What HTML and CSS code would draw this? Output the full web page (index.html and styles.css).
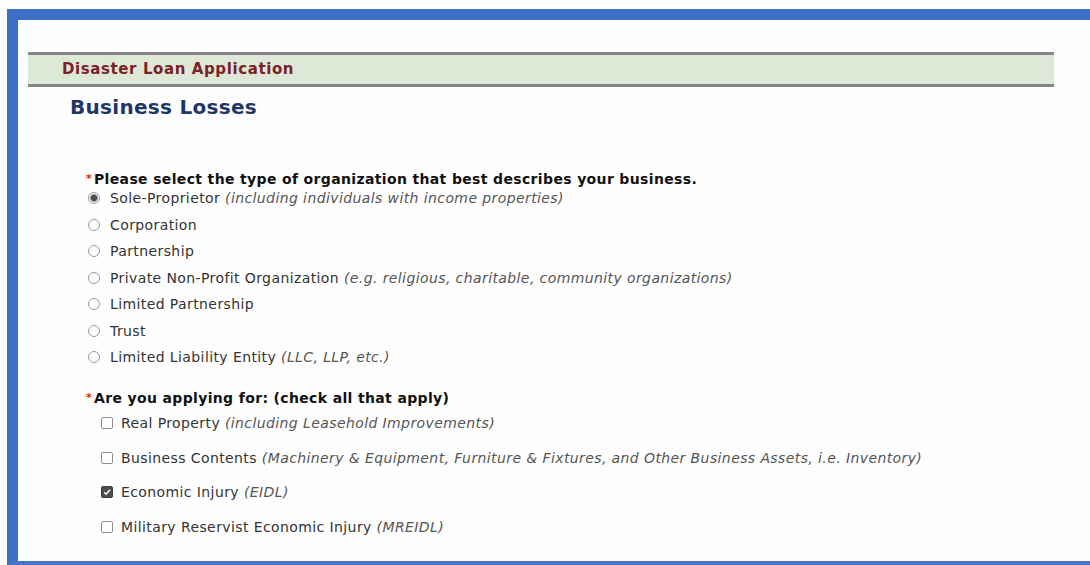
FILE: index.html
```html
<!DOCTYPE html>
<html lang="en">
<head>
<meta charset="utf-8">
<title>Disaster Loan Application</title>
<link rel="stylesheet" href="styles.css">
</head>
<body>
<div class="frame">
  <div class="app-bar"><span class="app-title">Disaster Loan Application</span></div>
  <h1 class="page-title">Business Losses</h1>

  <form class="loan-form">
    <fieldset class="question">
      <legend class="q-label"><span class="req">*</span>Please select the type of organization that best describes your business.</legend>
      <ul class="radio-list">
        <li class="opt"><span class="radio checked"></span>Sole-Proprietor <em>(including individuals with income properties)</em></li>
        <li class="opt"><span class="radio"></span>Corporation</li>
        <li class="opt"><span class="radio"></span>Partnership</li>
        <li class="opt"><span class="radio"></span>Private Non-Profit Organization <em>(e.g. religious, charitable, community organizations)</em></li>
        <li class="opt"><span class="radio"></span>Limited Partnership</li>
        <li class="opt"><span class="radio"></span>Trust</li>
        <li class="opt"><span class="radio"></span>Limited Liability Entity <em>(LLC, LLP, etc.)</em></li>
      </ul>
    </fieldset>

    <fieldset class="question">
      <legend class="q-label"><span class="req">*</span>Are you applying for: (check all that apply)</legend>
      <ul class="check-list">
        <li class="opt"><span class="check"></span>Real Property <em>(including Leasehold Improvements)</em></li>
        <li class="opt"><span class="check"></span>Business Contents <em>(Machinery &amp; Equipment, Furniture &amp; Fixtures, and Other Business Assets, i.e. Inventory)</em></li>
        <li class="opt"><span class="check checked"><svg viewBox="0 0 12 12" width="12" height="12"><path d="M2.5 6.2 L5 8.6 L9.6 3.2" fill="none" stroke="#fff" stroke-width="1.8"/></svg></span>Economic Injury <em>(EIDL)</em></li>
        <li class="opt"><span class="check"></span>Military Reservist Economic Injury <em>(MREIDL)</em></li>
      </ul>
    </fieldset>
  </form>
</div>
</body>
</html>
```

FILE: styles.css
```css
html, body {
  margin: 0;
  padding: 0;
  background: #ffffff;
  overflow: hidden;
}

body {
  font-family: "DejaVu Sans", Verdana, sans-serif;
}

.frame {
  box-sizing: border-box;
  width: 1083px;
  height: 556px;
  margin: 9px 0 0 7px;
  padding: 32px 0 0 10px;
  border-top: 11px solid #3d6fc9;
  border-left: 11px solid #3d6fc9;
  border-bottom: 4px solid #4a74c4;
  background: #fefefe;
}

.app-bar {
  box-sizing: border-box;
  width: 1026px;
  height: 35px;
  border-top: 3px solid #858585;
  border-bottom: 3px solid #858585;
  background: #dde9d6;
  padding: 0 0 1px 34px;
  display: flex;
  align-items: center;
}

.app-title {
  font-size: 15px;
  letter-spacing: 0.6px;
  font-weight: bold;
  color: #7a2226;
}

.page-title {
  margin: 8px 0 0 42px;
  font-size: 20px;
  letter-spacing: 0.3px;
  line-height: 24px;
  font-weight: bold;
  color: #1e3766;
}

.loan-form {
  margin: 52px 0 0 58px;
}

.question {
  border: 0;
  margin: 0;
  padding: 0;
}

.q-label {
  padding: 0;
  font-size: 14px;
  letter-spacing: 0.35px;
  line-height: 16px;
  font-weight: bold;
  color: #111;
  display: flex;
  align-items: center;
}

.req {
  color: #d22;
  font-size: 11px;
  width: 8px;
}

.radio-list,
.check-list {
  list-style: none;
  margin: 0;
  padding: 0;
}

.opt {
  display: flex;
  align-items: center;
  font-size: 14px;
  letter-spacing: 0.4px;
  color: #333;
  white-space: pre;
}

.opt em {
  color: #555;
}

.radio-list {
  margin-top: -2px;
}

.radio-list .opt {
  height: 26.5px;
}

.radio {
  box-sizing: border-box;
  width: 12px;
  height: 12px;
  margin: 0 10px 0 2px;
  border: 1px solid #9a9a9a;
  border-radius: 50%;
  background: #fff;
  display: flex;
  align-items: center;
  justify-content: center;
}

.radio.checked {
  background: radial-gradient(circle, #4e4e4e 0 2.6px, #9c9c9c 3.6px, #fff 4.4px);
}

.question + .question {
  margin-top: 19px;
}

.check-list {
  margin-top: 0;
}

.check-list .opt {
  height: 34.7px;
}

.check {
  box-sizing: border-box;
  width: 12px;
  height: 12px;
  margin: 0 8px 0 15px;
  border: 1px solid #8d8d8d;
  border-radius: 2px;
  background: #fff;
  display: flex;
  align-items: center;
  justify-content: center;
}

.check.checked {
  background: #4d4d4d;
  border-color: #3d3d3d;
}

.check svg {
  display: block;
}
```
